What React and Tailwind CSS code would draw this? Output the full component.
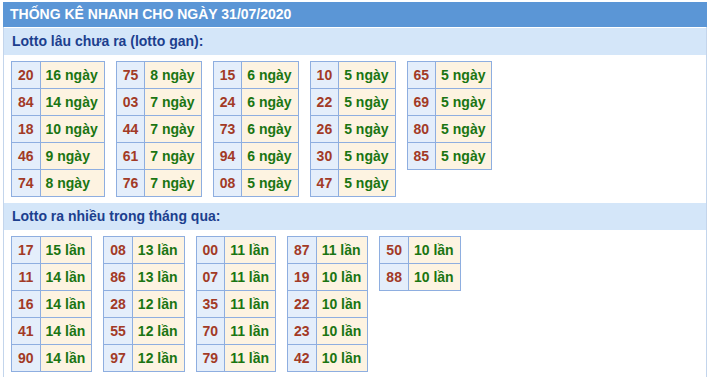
import React from 'react';

const GAN = [
    [['20', '16 ngày'], ['84', '14 ngày'], ['18', '10 ngày'], ['46', '9 ngày'], ['74', '8 ngày']],
    [['75', '8 ngày'], ['03', '7 ngày'], ['44', '7 ngày'], ['61', '7 ngày'], ['76', '7 ngày']],
    [['15', '6 ngày'], ['24', '6 ngày'], ['73', '6 ngày'], ['94', '6 ngày'], ['08', '5 ngày']],
    [['10', '5 ngày'], ['22', '5 ngày'], ['26', '5 ngày'], ['30', '5 ngày'], ['47', '5 ngày']],
    [['65', '5 ngày'], ['69', '5 ngày'], ['80', '5 ngày'], ['85', '5 ngày']],
];

const NHIEU = [
    [['17', '15 lần'], ['11', '14 lần'], ['16', '14 lần'], ['41', '14 lần'], ['90', '14 lần']],
    [['08', '13 lần'], ['86', '13 lần'], ['28', '12 lần'], ['55', '12 lần'], ['97', '12 lần']],
    [['00', '11 lần'], ['07', '11 lần'], ['35', '11 lần'], ['70', '11 lần'], ['79', '11 lần']],
    [['87', '11 lần'], ['19', '10 lần'], ['22', '10 lần'], ['23', '10 lần'], ['42', '10 lần']],
    [['50', '10 lần'], ['88', '10 lần']],
];

const StatTable = ({ rows }) => (
    <table className="border-collapse self-start">
        <tbody>
            {rows.map(([num, val]) => (
                <tr key={num} className="h-[27px]">
                    <td className="border border-[#8eaee0] bg-[#e4eefb] pl-[6px] pr-[6px] text-center text-[#a23a26] p-0">{num}</td>
                    <td className="border border-[#8eaee0] bg-[#fdf3e1] pl-[5px] pr-[6px] text-left text-[#1a7512] p-0">{val}</td>
                </tr>
            ))}
        </tbody>
    </table>
);

const Section = ({ title, tables }) => (
    <>
        <div className="h-[27px] bg-[#d4e6f9] pl-[8px] flex items-center text-[14px] font-bold text-[#1c3f8e]">{title}</div>
        <div className="flex gap-[11px] pl-[7px] py-[6px]">
            {tables.map((rows, i) => (
                <StatTable key={i} rows={rows} />
            ))}
        </div>
    </>
);

export default function App() {
    return (
        <div className="bg-white w-[707px] h-[377px] pt-[2px] pl-[3px]" style={{ fontFamily: '"Liberation Sans", Arial, sans-serif' }}>
            <div className="w-[704px] border-x border-[#c3d5ec] font-bold text-[14px]">
                <div className="h-[25px] bg-[#5b96d6] text-white pl-[7px] flex items-center -mx-px">
                    THỐNG KÊ NHANH CHO NGÀY 31/07/2020
                </div>
                <div className="h-px bg-white"></div>
                <Section title="Lotto lâu chưa ra (lotto gan):" tables={GAN} />
                <Section title="Lotto ra nhiều trong tháng qua:" tables={NHIEU} />
            </div>
        </div>
    );
}
